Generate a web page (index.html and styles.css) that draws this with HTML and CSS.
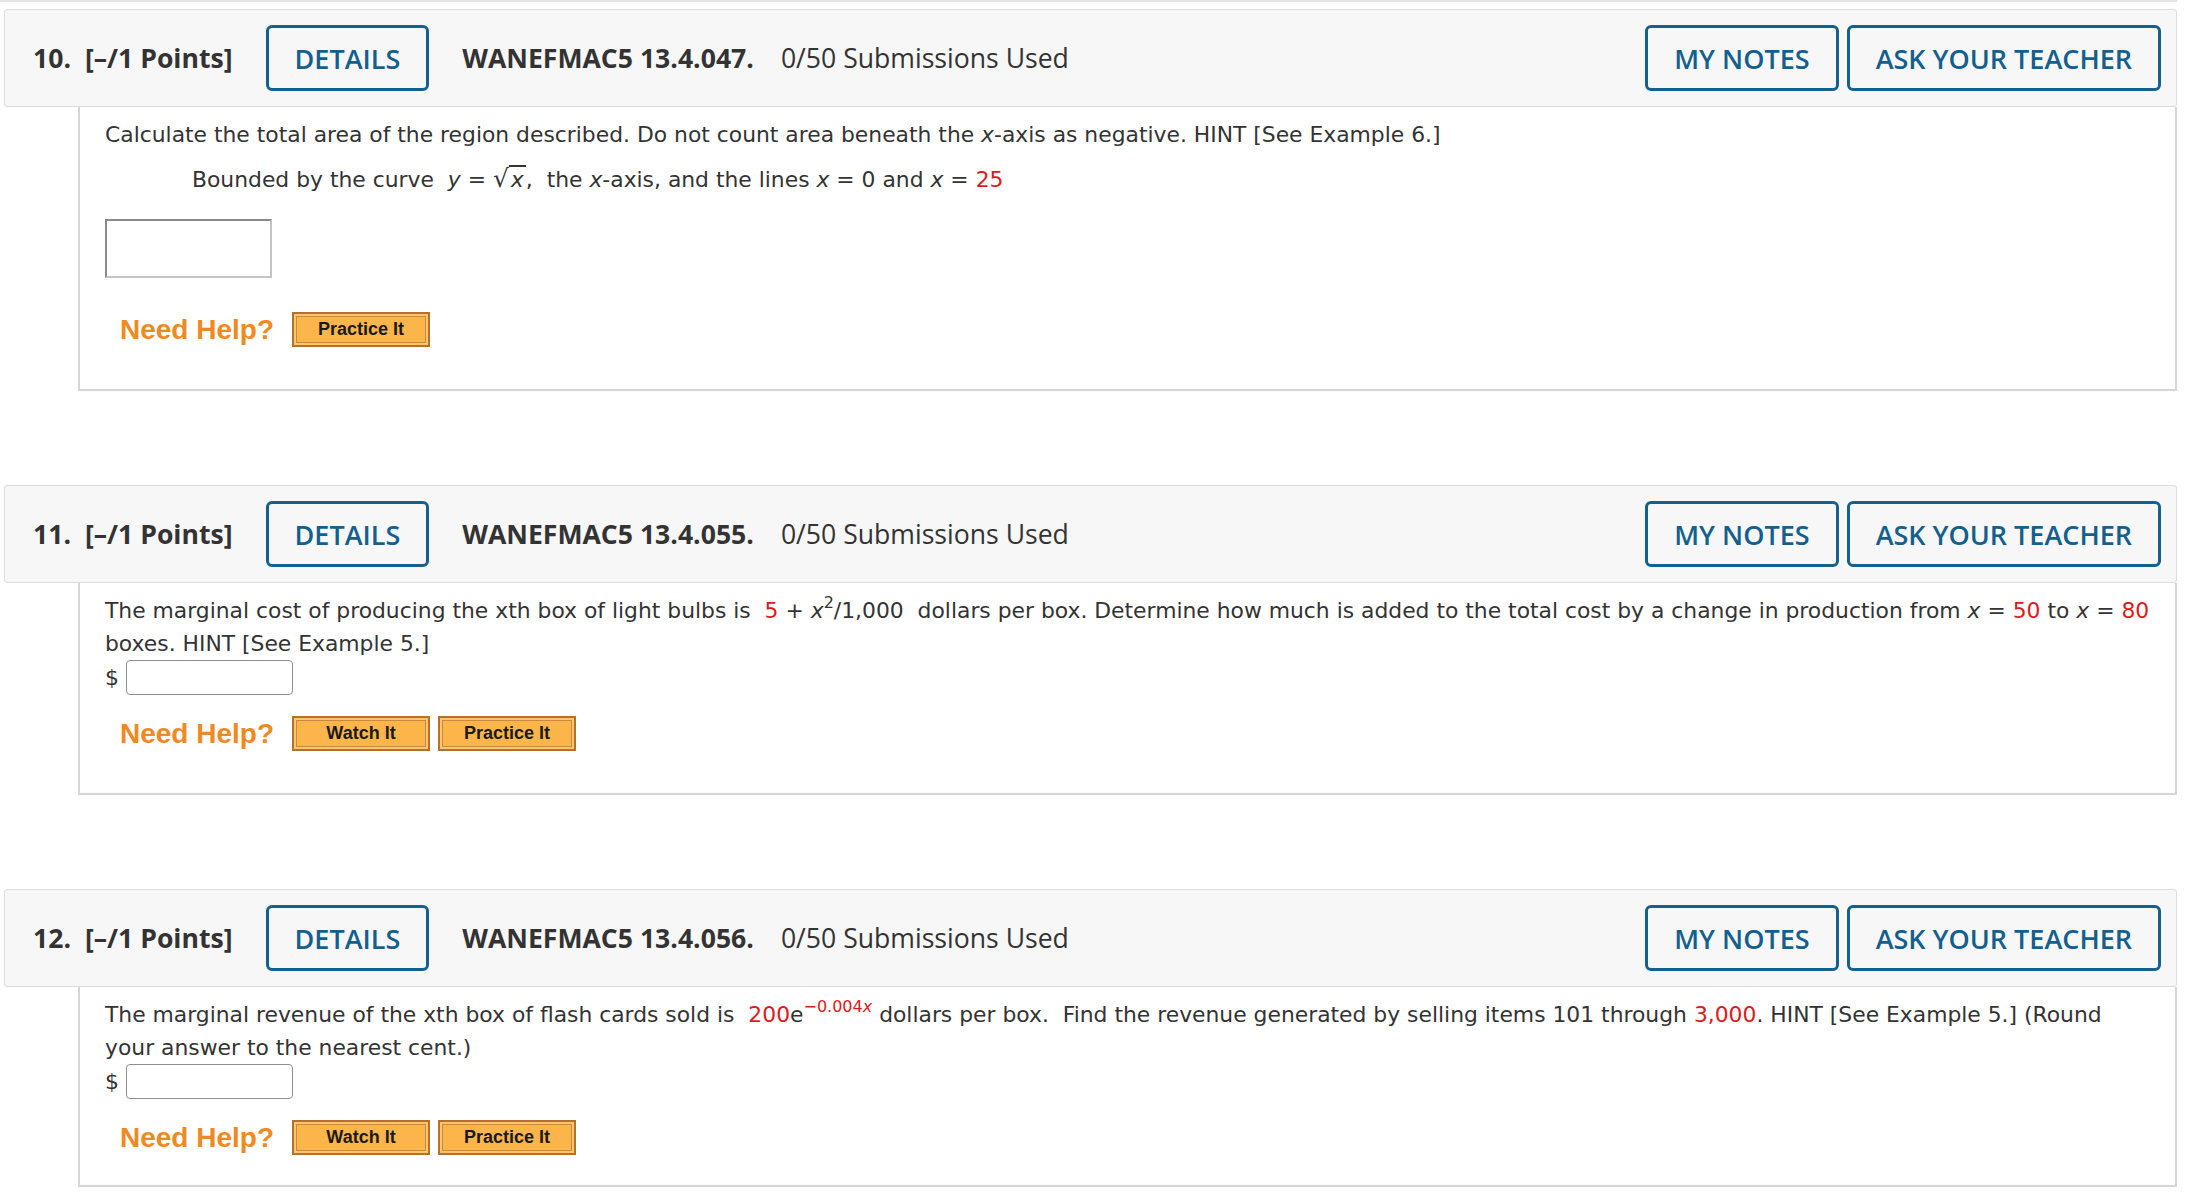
FILE: index.html
```html
<!DOCTYPE html>
<html lang="en">
<head>
    <meta charset="UTF-8">
    <title>Assignment Questions</title>
    <link rel="stylesheet" href="styles.css">
</head>
<body>
    <div class="page">
        <div class="prev-end"></div>

        <div class="question">
            <div class="q-header">
                <span class="q-num">10.</span>
                <span class="q-points">[&ndash;/1 Points]</span>
                <button type="button" class="q-btn q-details">DETAILS</button>
                <span class="q-code">WANEFMAC5 13.4.047.</span>
                <span class="q-subs">0/50 Submissions Used</span>
                <div class="q-actions">
                    <button type="button" class="q-btn">MY NOTES</button>
                    <button type="button" class="q-btn">ASK YOUR TEACHER</button>
                </div>
            </div>
            <div class="q-body">
                <p class="prompt">Calculate the total area of the region described. Do not count area beneath the <i>x</i>-axis as negative. HINT [See Example 6.]</p>
                <p class="indent">Bounded by the curve&nbsp; <i>y</i> = <span class="radical">&radic;</span><span class="radicand"><i>x</i></span>,&nbsp; the <i>x</i>-axis, and the lines <i>x</i> = 0 and <i>x</i> = <span class="given">25</span></p>
                <input type="text" class="answer-big">
                <div class="help help-wide">
                    <span class="help-label">Need Help?</span>
                    <button type="button" class="help-btn">Practice It</button>
                </div>
            </div>
        </div>

        <div class="question">
            <div class="q-header">
                <span class="q-num">11.</span>
                <span class="q-points">[&ndash;/1 Points]</span>
                <button type="button" class="q-btn q-details">DETAILS</button>
                <span class="q-code">WANEFMAC5 13.4.055.</span>
                <span class="q-subs">0/50 Submissions Used</span>
                <div class="q-actions">
                    <button type="button" class="q-btn">MY NOTES</button>
                    <button type="button" class="q-btn">ASK YOUR TEACHER</button>
                </div>
            </div>
            <div class="q-body">
                <p class="prompt">The marginal cost of producing the xth box of light bulbs is&nbsp; <span class="given">5</span> + <i>x</i><sup>2</sup>/1,000&nbsp; dollars per box. Determine how much is added to the total cost by a change in production from <i>x</i> = <span class="given">50</span> to <i>x</i> = <span class="given">80</span> boxes. HINT [See Example 5.]</p>
                <div class="answer-row">$ <input type="text" class="answer"></div>
                <div class="help">
                    <span class="help-label">Need Help?</span>
                    <button type="button" class="help-btn">Watch It</button>
                    <button type="button" class="help-btn">Practice It</button>
                </div>
            </div>
        </div>

        <div class="question">
            <div class="q-header">
                <span class="q-num">12.</span>
                <span class="q-points">[&ndash;/1 Points]</span>
                <button type="button" class="q-btn q-details">DETAILS</button>
                <span class="q-code">WANEFMAC5 13.4.056.</span>
                <span class="q-subs">0/50 Submissions Used</span>
                <div class="q-actions">
                    <button type="button" class="q-btn">MY NOTES</button>
                    <button type="button" class="q-btn">ASK YOUR TEACHER</button>
                </div>
            </div>
            <div class="q-body q-last">
                <p class="prompt">The marginal revenue of the xth box of flash cards sold is&nbsp; <span class="given">200</span>e<sup class="given">&minus;0.004<i>x</i></sup> dollars per box.&nbsp; Find the revenue generated by selling items 101 through <span class="given">3,000</span>. HINT [See Example 5.] (Round<br>your answer to the nearest cent.)</p>
                <div class="answer-row">$ <input type="text" class="answer"></div>
                <div class="help">
                    <span class="help-label">Need Help?</span>
                    <button type="button" class="help-btn">Watch It</button>
                    <button type="button" class="help-btn">Practice It</button>
                </div>
            </div>
        </div>
    </div>
</body>
</html>
```

FILE: styles.css
```css
body {
    margin: 0;
    background: #fff;
    font-family: Verdana, "DejaVu Sans", sans-serif;
    color: #333;
}

.page {
    padding: 0 13px 0 4px;
}

.prev-end {
    height: 2px;
    margin-left: -4px;
    background: #e4e4e4;
}

.question {
    margin-top: 7px;
    margin-bottom: 94px;
}

.q-header {
    display: flex;
    align-items: center;
    height: 96px;
    padding: 0 15px 0 28px;
    background: #f7f7f7;
    border: 1px solid #dcdcdc;
    border-radius: 3px;
    font-family: "Open Sans", sans-serif;
    font-size: 26.6px;
    color: #333;
}

.q-num {
    font-weight: 700;
    margin-right: 14px;
}

.q-points {
    font-weight: 700;
    margin-right: 33px;
}

.q-code {
    font-weight: 700;
    margin-left: 33px;
    margin-right: 27px;
}

.q-subs {
    font-weight: 400;
}

.q-actions {
    display: flex;
    gap: 8px;
    margin-left: auto;
}

.q-btn {
    height: 66px;
    padding: 0 26px;
    background: transparent;
    border: 3px solid #13618f;
    border-radius: 6px;
    font-family: "Open Sans", sans-serif;
    font-size: 27px;
    font-weight: 600;
    color: #13608e;
    cursor: pointer;
}

.q-body {
    margin-left: 74px;
    padding: 11px 8px 42px 25px;
    border: 2px solid #d6d6d6;
    border-top: none;
    font-size: 21.85px;
    line-height: 33px;
}

.q-last {
    padding-bottom: 30px;
}

.prompt {
    margin: 0;
}

.indent {
    margin: 11px 0 0 87px;
}

.given {
    color: #e0191b;
}

.radical {
    font-size: 25px;
}

.radicand {
    border-top: 2px solid #333;
    padding: 0 2px;
}

sup {
    font-size: 16px;
    line-height: 0;
    vertical-align: 10px;
}

.answer-big {
    display: block;
    width: 167px;
    height: 59px;
    margin-top: 23px;
    box-sizing: border-box;
    border: 2px solid #8a8a8a;
    border-right-color: #c4c4c4;
    border-bottom-color: #c4c4c4;
}

.answer-row {
    display: flex;
    align-items: center;
    gap: 7px;
    height: 35px;
}

.answer {
    width: 167px;
    height: 35px;
    box-sizing: border-box;
    border: 1px solid #8e8e8e;
    border-radius: 4px;
}

.help {
    display: flex;
    align-items: center;
    gap: 8px;
    height: 35px;
    margin: 21px 0 0 15px;
}

.help-wide {
    margin-top: 34px;
}

.help-label {
    margin-right: 10px;
    font-family: Arial, "Liberation Sans", sans-serif;
    font-size: 28px;
    font-weight: 700;
    color: #f0891f;
}

.help-btn {
    width: 138px;
    height: 35px;
    padding: 0;
    background: #fcb54b;
    border: 2px solid #b4712d;
    box-shadow: inset 0 0 0 2px #fdc56c, inset 0 0 0 3px #c98a3e;
    font-family: Arial, "Liberation Sans", sans-serif;
    font-size: 18px;
    font-weight: 700;
    color: #1a1a1a;
    cursor: pointer;
}
```
